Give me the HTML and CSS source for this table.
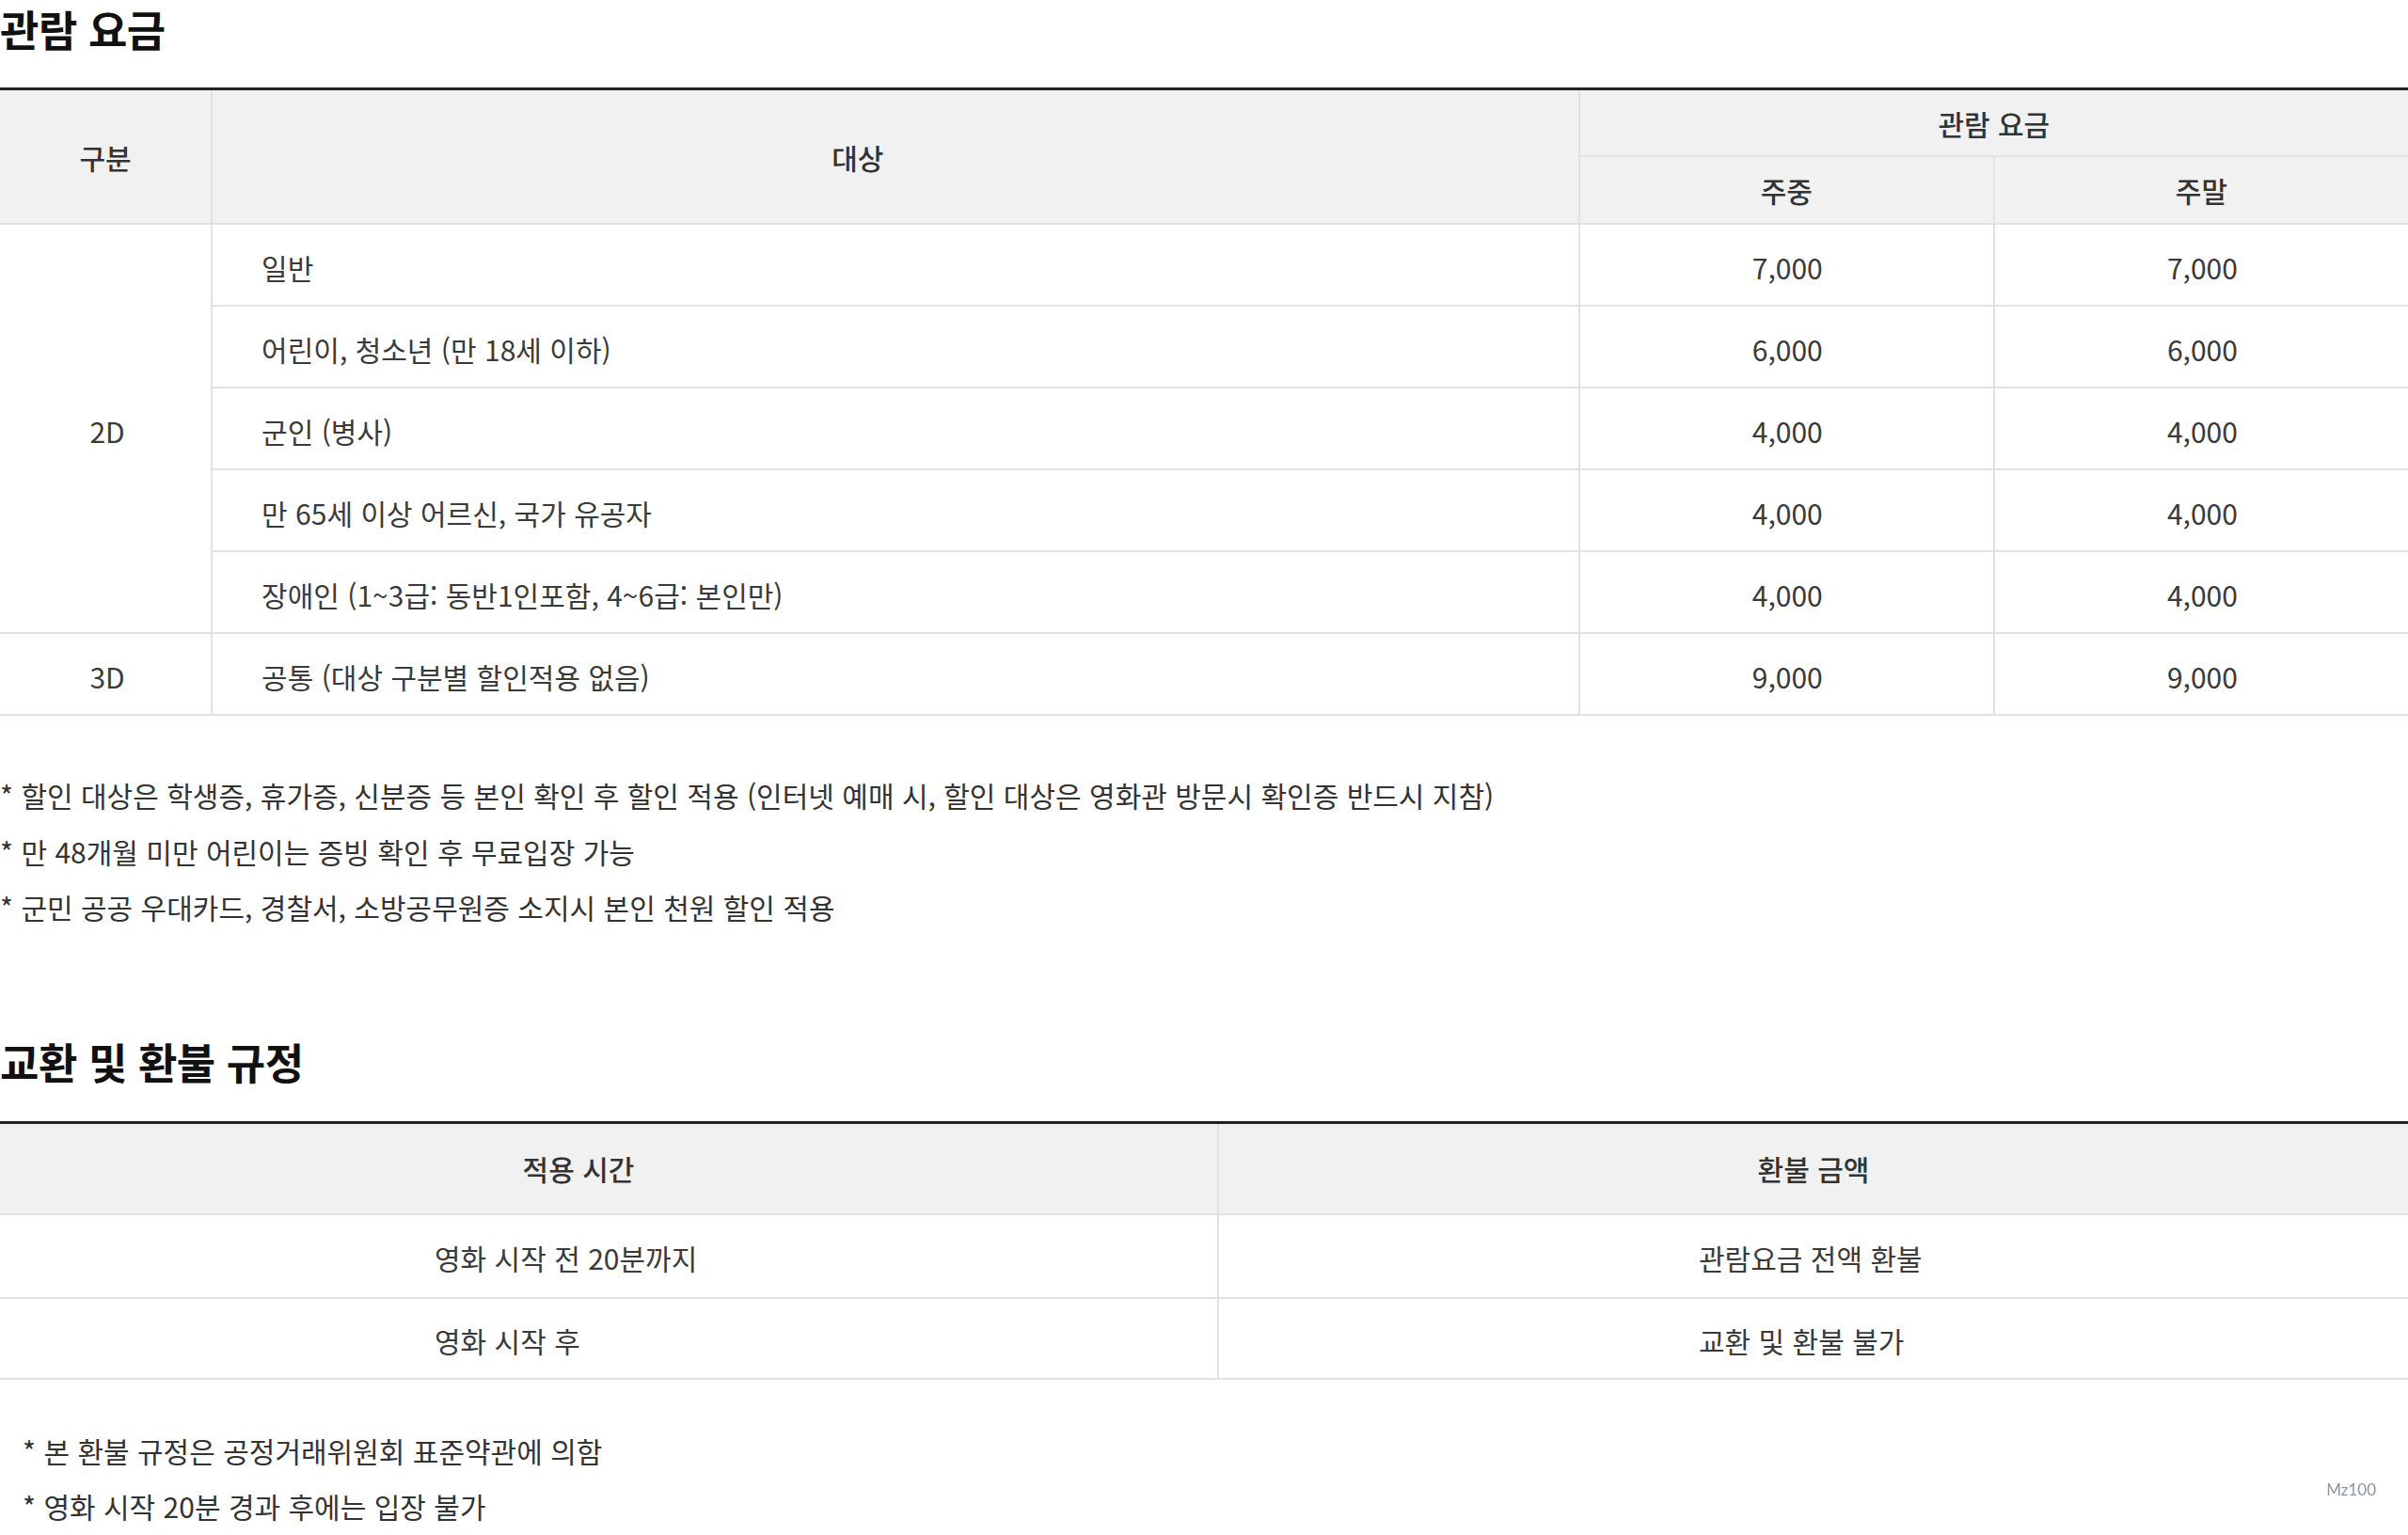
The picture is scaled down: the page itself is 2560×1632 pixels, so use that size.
FILE: index.html
```html
<!DOCTYPE html>
<html lang="ko">
<head>
<meta charset="utf-8">
<title>관람 요금</title>
<link rel="stylesheet" href="styles.css">
</head>
<body>
<main class="page">
  <section class="section">
    <h2 class="section-title">관람 요금</h2>
    <table class="fee-table">
      <colgroup>
        <col class="c-type">
        <col class="c-target">
        <col class="c-price">
        <col class="c-price">
      </colgroup>
      <thead>
        <tr class="head-row-1">
          <th rowspan="2" class="first">구분</th>
          <th rowspan="2" class="th-target">대상</th>
          <th colspan="2">관람 요금</th>
        </tr>
        <tr class="head-row-2">
          <th>주중</th>
          <th>주말</th>
        </tr>
      </thead>
      <tbody>
        <tr>
          <td rowspan="5" class="first type">2D</td>
          <td class="target">일반</td>
          <td class="price">7,000</td>
          <td class="price">7,000</td>
        </tr>
        <tr>
          <td class="target">어린이, 청소년 (만 18세 이하)</td>
          <td class="price">6,000</td>
          <td class="price">6,000</td>
        </tr>
        <tr>
          <td class="target">군인 (병사)</td>
          <td class="price">4,000</td>
          <td class="price">4,000</td>
        </tr>
        <tr>
          <td class="target">만 65세 이상 어르신, 국가 유공자</td>
          <td class="price">4,000</td>
          <td class="price">4,000</td>
        </tr>
        <tr>
          <td class="target">장애인 (1~3급: 동반1인포함, 4~6급: 본인만)</td>
          <td class="price">4,000</td>
          <td class="price">4,000</td>
        </tr>
        <tr>
          <td class="first type">3D</td>
          <td class="target">공통 (대상 구분별 할인적용 없음)</td>
          <td class="price">9,000</td>
          <td class="price">9,000</td>
        </tr>
      </tbody>
    </table>
    <ul class="notes">
      <li>* 할인 대상은 학생증, 휴가증, 신분증 등 본인 확인 후 할인 적용 (인터넷 예매 시, 할인 대상은 영화관 방문시 확인증 반드시 지참)</li>
      <li>* 만 48개월 미만 어린이는 증빙 확인 후 무료입장 가능</li>
      <li>* 군민 공공 우대카드, 경찰서, 소방공무원증 소지시 본인 천원 할인 적용</li>
    </ul>
  </section>

  <section class="section section-refund">
    <h2 class="section-title">교환 및 환불 규정</h2>
    <table class="refund-table">
      <colgroup>
        <col class="c-time">
        <col class="c-amount">
      </colgroup>
      <thead>
        <tr class="refund-head">
          <th class="first th-time">적용 시간</th>
          <th>환불 금액</th>
        </tr>
      </thead>
      <tbody>
        <tr class="refund-row">
          <td class="first time">영화 시작 전 20분까지</td>
          <td class="amount">관람요금 전액 환불</td>
        </tr>
        <tr class="refund-row">
          <td class="first time">영화 시작 후</td>
          <td class="amount">교환 및 환불 불가</td>
        </tr>
      </tbody>
    </table>
    <ul class="notes notes-indent">
      <li>* 본 환불 규정은 공정거래위원회 표준약관에 의함</li>
      <li>* 영화 시작 20분 경과 후에는 입장 불가</li>
    </ul>
  </section>
</main>
<div class="build-tag">Mz100</div>
</body>
</html>
```

FILE: styles.css
```css
html, body {
  margin: 0;
  padding: 0;
  background: #ffffff;
}

body {
  font-family: "Noto Sans CJK KR", "Noto Sans", sans-serif;
  color: #333333;
  width: 2560px;
  height: 1632px;
  overflow: hidden;
}

.page {
  width: 2560px;
}

.section-title {
  margin: 0;
  font-size: 45px;
  line-height: 62px;
  font-weight: 700;
  color: #111111;
  letter-spacing: -0.5px;
}

table {
  width: 100%;
  border-collapse: separate;
  border-spacing: 0;
  table-layout: fixed;
  border-top: 3px solid #222222;
  font-size: 30px;
}

th, td {
  padding: 0;
  border-bottom: 2px solid #e2e2e2;
  border-left: 2px solid #e2e2e2;
  text-align: center;
  vertical-align: middle;
  line-height: 40px;
}

th.first, td.first {
  border-left: none;
}

th {
  background: #f1f1f1;
  font-weight: 500;
  color: #333333;
}

td {
  color: #3a3a3a;
  padding-top: 4px;
}

/* fee table */
.fee-table {
  margin-top: 31px;
}

.c-type { width: 224px; }
.c-target { width: 1453px; }
.c-price { width: 441px; }

.head-row-1 { height: 71px; }
.head-row-2 { height: 72px; }

.fee-table tbody tr { height: 87px; }

.th-target {
  padding-right: 80px;
}

td.target {
  text-align: left;
  padding-left: 52px;
}

td.type {
  padding-left: 4px;
}

td.price {
  padding-left: 2px;
}

/* notes */
.notes {
  list-style: none;
  margin: 55px 0 0;
  padding: 0;
  font-size: 30px;
  line-height: 59.5px;
  color: #333333;
}

.notes-indent {
  padding-left: 24px;
  margin-top: 46px;
}

/* refund section */
.section-refund {
  margin-top: 103px;
}

.refund-table {
  margin-top: 32px;
}

.c-time { width: 1294px; }
.c-amount { width: 1266px; }

.refund-head { height: 97px; }
.refund-row:nth-child(1) { height: 89px; }
.refund-row:nth-child(2) { height: 86px; }

.th-time {
  padding-right: 64px;
}

td.time {
  text-align: left;
  padding-left: 462px;
}

td.amount {
  text-align: left;
  padding-left: 510px;
}

.build-tag {
  position: fixed;
  right: 34px;
  bottom: 38px;
  font-family: "Lato", "Open Sans", sans-serif;
  font-size: 17px;
  line-height: 20px;
  color: #8d95a0;
}
```
